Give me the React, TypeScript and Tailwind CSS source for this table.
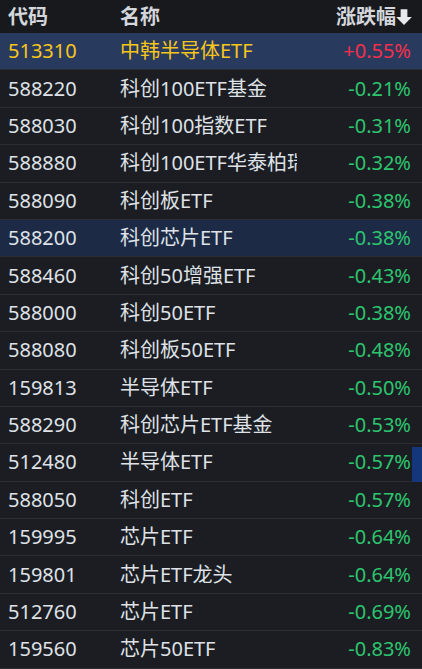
type Row = { code: string; name: string; pct: string; hl?: "strong" | "soft" };

const rows: Row[] = [
  { code: "513310", name: "中韩半导体ETF", pct: "+0.55%", hl: "strong" },
  { code: "588220", name: "科创100ETF基金", pct: "-0.21%" },
  { code: "588030", name: "科创100指数ETF", pct: "-0.31%" },
  { code: "588880", name: "科创100ETF华泰柏瑞", pct: "-0.32%" },
  { code: "588090", name: "科创板ETF", pct: "-0.38%" },
  { code: "588200", name: "科创芯片ETF", pct: "-0.38%", hl: "soft" },
  { code: "588460", name: "科创50增强ETF", pct: "-0.43%" },
  { code: "588000", name: "科创50ETF", pct: "-0.38%" },
  { code: "588080", name: "科创板50ETF", pct: "-0.48%" },
  { code: "159813", name: "半导体ETF", pct: "-0.50%" },
  { code: "588290", name: "科创芯片ETF基金", pct: "-0.53%" },
  { code: "512480", name: "半导体ETF", pct: "-0.57%" },
  { code: "588050", name: "科创ETF", pct: "-0.57%" },
  { code: "159995", name: "芯片ETF", pct: "-0.64%" },
  { code: "159801", name: "芯片ETF龙头", pct: "-0.64%" },
  { code: "512760", name: "芯片ETF", pct: "-0.69%" },
  { code: "159560", name: "芯片50ETF", pct: "-0.83%" },
];

function SortArrow() {
  return (
    <svg width="18" height="18" viewBox="0 0 16 16" className="-ml-[1px]">
      <path d="M5 1h6v7h4l-7 7-7-7h4z" fill="#e6e8eb" />
    </svg>
  );
}

export default function App() {
  return (
    <div
      className="w-[422px] h-[669px] overflow-hidden bg-[#1b1d22] text-[20px] leading-[28px] relative"
      style={{ fontFamily: '"Noto Sans", "Noto Sans CJK SC", sans-serif' }}
    >
      <div className="h-[33px] flex items-center bg-[#17191d] text-[#d3d6db] font-bold">
        <div className="w-[120px] pl-[8px]">代码</div>
        <div className="flex-1">名称</div>
        <div className="flex items-center pr-[9px]">
          涨跌幅
          <SortArrow />
        </div>
      </div>
      {rows.map((r) => {
        const bg =
          r.hl === "strong"
            ? "bg-[#293a5f]"
            : r.hl === "soft"
            ? "bg-[#1c2a46]"
            : "bg-[#1b1d22]";
        const main = r.hl === "strong" ? "text-[#f7c61b]" : "text-[#dfe2e7]";
        const pctColor = r.pct.startsWith("+") ? "text-[#f3304b]" : "text-[#2dc56f]";
        return (
          <div
            key={r.code + r.name}
            className={`h-[37.4px] flex items-center border-b border-[#2c2e34] ${bg}`}
          >
            <div className={`w-[120px] pl-[8px] ${main}`}>{r.code}</div>
            <div className={`w-[177px] overflow-hidden whitespace-nowrap ${main}`}>{r.name}</div>
            <div className={`flex-1 text-right pr-[11px] ${pctColor}`}>{r.pct}</div>
          </div>
        );
      })}
      <div className="absolute right-0 top-[447px] w-[10px] h-[35px] bg-[#14377b]" />
    </div>
  );
}
